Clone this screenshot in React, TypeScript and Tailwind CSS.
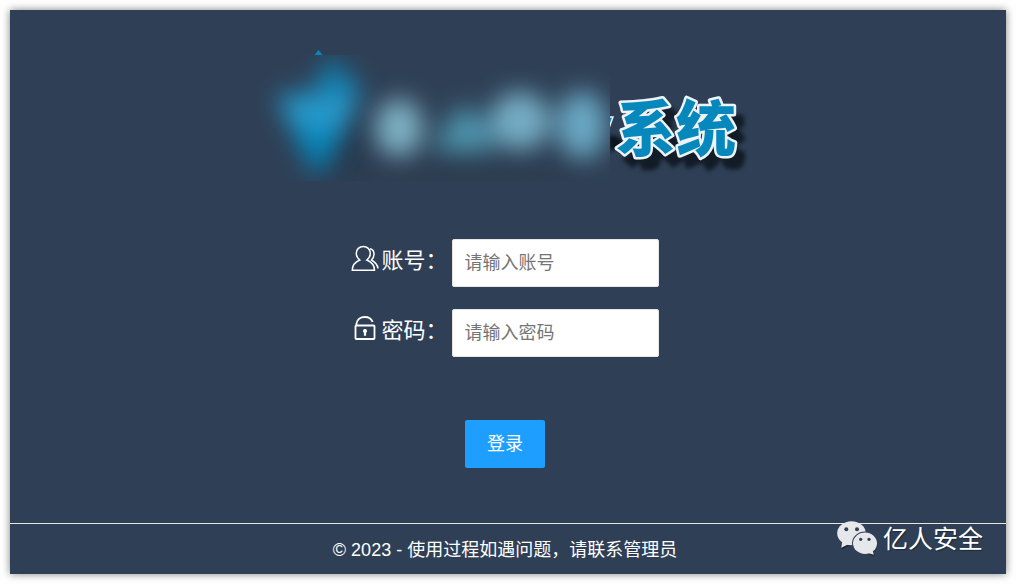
import React from 'react';

const FONT = "font-['Liberation_Sans','Noto_Sans_CJK_SC',sans-serif]";

const Logo: React.FC = () => (
  <svg viewBox="0 0 500 140" className="w-[500px] max-w-full" role="img" aria-label="系统">
    <defs>
      <filter id="soft" x="-100%" y="-100%" width="300%" height="300%" colorInterpolationFilters="sRGB">
        <feGaussianBlur stdDeviation="12" />
      </filter>
      <filter id="smudge" x="-100%" y="-100%" width="300%" height="300%" colorInterpolationFilters="sRGB">
        <feGaussianBlur stdDeviation="2" />
      </filter>
      <filter id="shadow" x="-20%" y="-20%" width="150%" height="160%" colorInterpolationFilters="sRGB">
        <feDropShadow dx="8" dy="11" stdDeviation="2" floodColor="#0b131c" floodOpacity="0.8" />
      </filter>
      <linearGradient id="gem" x1="0" y1="0" x2="0" y2="1">
        <stop offset="0" stopColor="#0c6f9c" />
        <stop offset="0.3" stopColor="#1683b3" />
        <stop offset="0.5" stopColor="#30a0d0" />
        <stop offset="0.7" stopColor="#0788bd" />
        <stop offset="1" stopColor="#0778a8" />
      </linearGradient>
      <clipPath id="left">
        <rect x="0" y="9" width="352" height="126" />
      </clipPath>
      <clipPath id="right">
        <rect x="352" y="0" width="148" height="140" />
      </clipPath>
    </defs>
    <path d="M60.500 4 L64.500 9 H56.500 Z" fill="#0a86bd" />
    <g clipPath="url(#left)">
      <path d="M78 126 L100 70 L106 84 L86 128 Z" fill="#14303f" opacity="0.7" filter="url(#soft)" />
      <path d="M72 8 L104 44 L66 126 L54 126 L18 48 L54 46 Z" fill="url(#gem)" filter="url(#soft)" />
      <g filter="url(#soft)">
        <ellipse cx="210" cy="122" rx="130" ry="5" fill="#25313f" opacity="0.7" />
        <ellipse cx="141" cy="82" rx="24" ry="29" fill="#86bccf" opacity="0.9" />
        <path d="M176 106 L188 78 L206 58 L230 78 L236 106 Z" fill="#4f9cb5" opacity="0.9" />
        <ellipse cx="262" cy="75" rx="30" ry="29" fill="#7cb9d0" opacity="0.9" />
        <ellipse cx="324" cy="79" rx="25" ry="34" fill="#70b3cf" opacity="0.9" />
      </g>
    </g>
    <g clipPath="url(#right)">
      <path d="M350 90 q8 -3 18 8 l-16 8 z" fill="#0b131c" filter="url(#smudge)" />
      <path d="M350 71 L355 71 L351 82" fill="#0788bd" stroke="#eef3f7" strokeWidth="1.500" />
    </g>
    <text
      x="358"
      y="105"
      fontFamily="'Noto Sans CJK SC', sans-serif"
      fontWeight="900"
      fontSize="60"
      fill="#0788bd"
      stroke="#eef3f7"
      strokeWidth="5"
      strokeLinejoin="round"
      paintOrder="stroke"
      filter="url(#shadow)"
    >
      系统
    </text>
  </svg>
);

const UserIcon: React.FC = () => (
  <svg viewBox="0 0 28 28" className="size-7" fill="none" stroke="#fff" strokeWidth="1.500" aria-hidden="true">
    <path d="M8.800 15 C6.200 13 5.300 10.500 5.300 8.300 C5.300 4.300 8.300 1.500 12.300 1.500 C16.300 1.500 19.300 4.300 19.300 8.300 C19.300 10.500 18.400 13 15.800 15 C20.500 17 23.500 20 23.500 25.300 H1.300 C1.300 20 4 17 8.800 15 Z" />
    <path d="M19 3.800 C21.500 4.300 23 6.500 23 9 C23 11.500 22 13.500 20.500 15 C24 17 26.500 19.500 27 23.500" />
  </svg>
);

const LockIcon: React.FC = () => (
  <svg viewBox="0 0 28 28" className="size-7" fill="none" stroke="#fff" strokeWidth="1.800" aria-hidden="true">
    <rect x="4.500" y="10.500" width="19" height="13.500" rx="0.800" />
    <path d="M5.500 10.500 V8.500 C6 4.500 9.500 2 13.800 2 C17.800 2 20.500 4 21.700 7" />
    <path d="M14 14 a2 2 0 0 1 1.100 3.700 v3 h-2.200 v-3 a2 2 0 0 1 1.100 -3.700 z" fill="#fff" stroke="none" />
  </svg>
);

const WechatIcon: React.FC = () => (
  <svg viewBox="0 0 42 36" className="w-[42px]" aria-hidden="true">
    <g fill="#1c2836" transform="translate(0.200 0.400)">
      <ellipse cx="15" cy="12.500" rx="14.300" ry="12" />
      <ellipse cx="28.500" cy="22.500" rx="12" ry="10.800" />
      <path d="M5 21 L5 28 L12 24 Z M31 33 L37.500 34.500 L36 29 Z" />
    </g>
    <g fill="#e6e7ea" transform="translate(-0.700 -0.700)">
      <ellipse cx="15.200" cy="13" rx="14.300" ry="12" />
      <path d="M6 21 L5 27.500 L12 24 Z" />
    </g>
    <ellipse cx="28" cy="22.300" rx="13" ry="11.800" fill="#2f4056" />
    <g fill="#e6e7ea" transform="translate(-0.700 -0.700)">
      <ellipse cx="28.700" cy="23" rx="12" ry="10.700" />
      <path d="M31 32.500 L37.500 34.500 L36 29 Z" />
    </g>
    <g fill="#2f4056" transform="translate(-0.700 -0.700)">
      <circle cx="10" cy="9" r="2" />
      <circle cx="20.700" cy="9" r="2" />
      <circle cx="24.400" cy="19" r="1.600" />
      <circle cx="32.700" cy="19" r="1.600" />
    </g>
  </svg>
);

interface FieldProps {
  id: string;
  label: string;
  type: string;
  placeholder: string;
  icon: React.ReactNode;
}

const Field: React.FC<FieldProps> = ({ id, label, type, placeholder, icon }) => (
  <div className="flex items-center gap-1">
    <label htmlFor={id} className="flex items-center gap-0.5 pb-1 text-[22px] leading-8">
      <span className="pb-1">{icon}</span>
      {label}
    </label>
    <input
      id={id}
      type={type}
      placeholder={placeholder}
      className="h-12 w-[207px] rounded-xs border border-[#e6e6e6] bg-white px-3 text-lg text-gray-800 placeholder:text-[#757575] outline-none"
    />
  </div>
);

export default function App() {
  return (
    <div className={`min-h-screen bg-white p-2.5 ${FONT}`}>
      <div className="relative flex min-h-[calc(100vh-20px)] flex-col bg-[#2f4056] text-white shadow-[0_0_8px_rgba(0,0,0,0.5)]">
        <main className="flex flex-1 flex-col items-center pt-9">
          <Logo />
          <form className="mt-[53px] flex flex-col items-center pr-1.5" onSubmit={(e) => e.preventDefault()}>
            <div className="flex flex-col gap-[22px]">
              <Field id="account" label="账号：" type="text" placeholder="请输入账号" icon={<UserIcon />} />
              <Field id="password" label="密码：" type="password" placeholder="请输入密码" icon={<LockIcon />} />
            </div>
            <button type="submit" className="mt-[63px] h-12 rounded-xs bg-[#1e9fff] px-[22px] text-lg">
              登录
            </button>
          </form>
        </main>
        <footer className="border-t border-[#e6e6e6] pt-[13px] pr-1.5 pb-[11px] text-center text-lg leading-[26px]">
          © 2023 - 使用过程如遇问题，请联系管理员
        </footer>
        <div className="absolute right-[23px] bottom-[17px] flex items-center gap-1">
          <WechatIcon />
          <span className="text-[25px] leading-9 [text-shadow:1px_1px_1px_#1c2836]">亿人安全</span>
        </div>
      </div>
    </div>
  );
}
